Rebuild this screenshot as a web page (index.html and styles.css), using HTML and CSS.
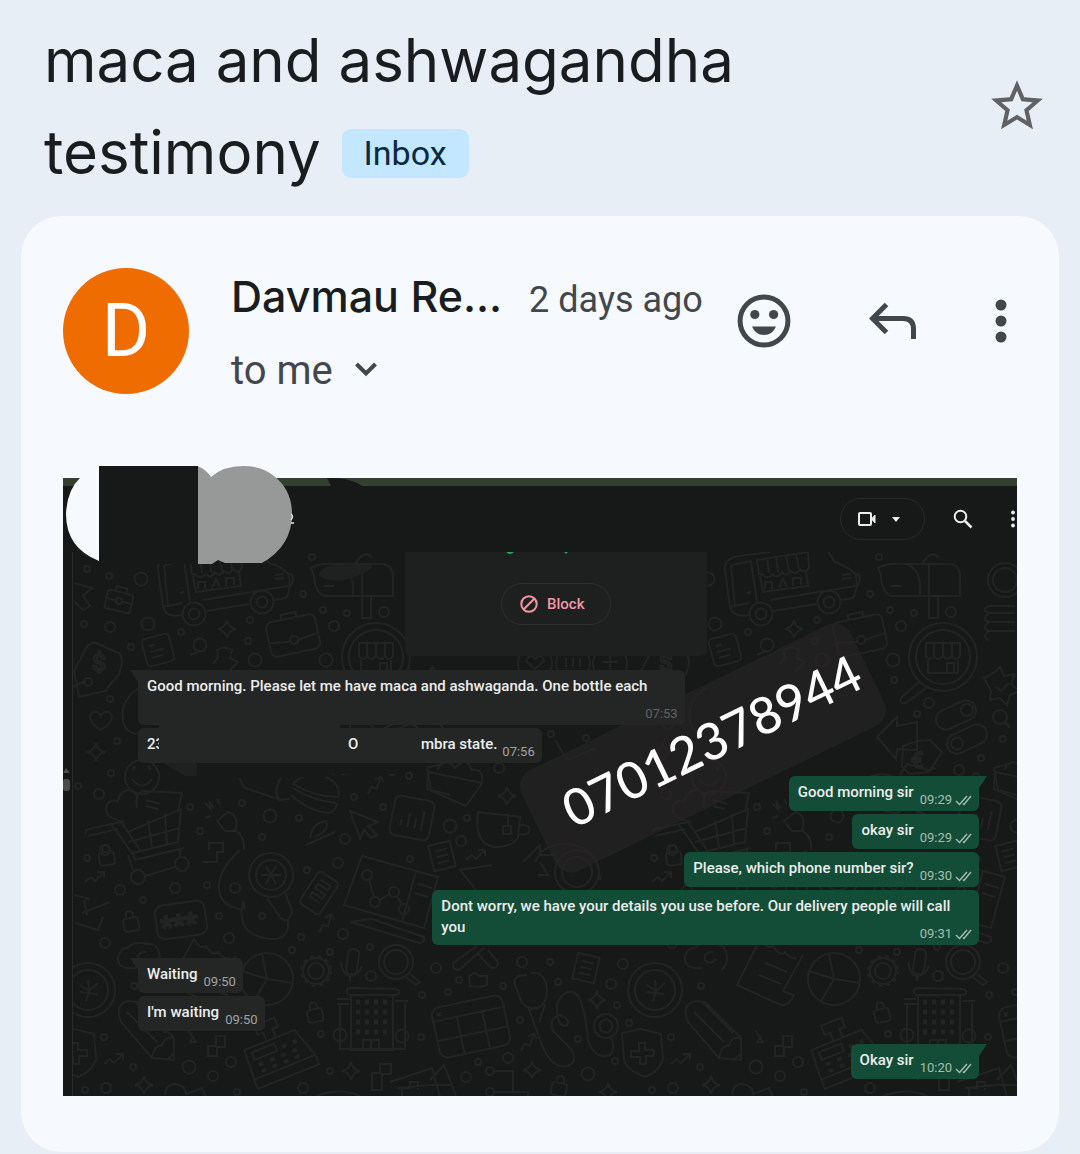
FILE: index.html
```
<!DOCTYPE html>
<html lang="en">

<head>
    <meta charset="UTF-8">
    <meta name="viewport" content="width=device-width, initial-scale=1.0">
    <title>maca and ashwagandha testimony</title>
    <link rel="stylesheet" href="styles.css">
</head>

<body>
    <header class="subject">
        <h1>maca and ashwagandha<br>testimony <span class="label">Inbox</span></h1>
        <button class="icon-button" aria-label="Star">
            <svg width="62" height="62" viewBox="0 0 24 24" fill="#5f6164"><path d="M22 9.24l-7.19-.62L12 2 9.19 8.63 2 9.24l5.46 4.73L5.82 21 12 17.27 18.18 21l-1.63-7.03L22 9.24zM12 15.4l-3.76 2.27 1-4.28-3.32-2.88 4.38-.38L12 6.1l1.71 4.04 4.38.38-3.32 2.88 1 4.28L12 15.4z"/></svg>
        </button>
    </header>

    <main class="card">
        <div class="sender">
            <div class="avatar">D</div>
            <div class="who">
                <div class="name-row">
                    <span class="name">Davmau Re...</span>
                    <span class="date">2 days ago</span>
                </div>
                <button class="to-me">to me
                    <svg width="22" height="18" viewBox="0 0 22 18" fill="none" stroke="#42474c" stroke-width="4"><path d="M1.500 2L11 11.500L20.500 2"/></svg>
                </button>
            </div>
            <div class="actions">
                <button class="icon-button" aria-label="Add reaction">
                    <svg width="54" height="54" viewBox="0 0 54 54" fill="#42474c">
                        <circle cx="27" cy="27" r="23.900" fill="none" stroke="#42474c" stroke-width="5"/>
                        <circle cx="17.800" cy="20.500" r="4.600"/><circle cx="36.600" cy="20.500" r="4.600"/>
                        <path d="M15 32.500H39Q35.500 41 27 41T15 32.500Z"/>
                    </svg>
                </button>
                <button class="icon-button" aria-label="Reply">
                    <svg width="48" height="40" viewBox="0 0 48 40" fill="none" stroke="#42474c" stroke-width="5"><path d="M17.500 3.500L3.500 17.500L17.500 31.500M4 17.500H34Q44.500 17.500 44.500 28V38"/></svg>
                </button>
                <button class="icon-button" aria-label="More options">
                    <svg width="12" height="44" viewBox="0 0 12 44" fill="#42474c"><circle cx="6" cy="6" r="5.500"/><circle cx="6" cy="22" r="5.500"/><circle cx="6" cy="38" r="5.500"/></svg>
                </button>
            </div>
        </div>

        <div class="attachment">
            <div class="shot">
                <!-- chat wallpaper, one 567px wide tile drawn twice -->
                <svg class="wallpaper" aria-hidden="true">
                    <defs>
                        <path id="spark" d="M0 -9Q1.500 -1.500 9 0Q1.500 1.500 0 9Q-1.500 1.500 -9 0Q-1.500 -1.500 0 -9Z"/>
                        <g id="lock"><rect x="-8" y="-3" width="15" height="13" rx="3"/><path d="M-4 -3V-8Q-1 -12 3 -8V-3"/></g>
                        <path id="trend" d="M-10 5L-4 0L0 4L9 -5M2 -5H9V1"/>
                        <g id="paper"><rect x="-11" y="-13" width="22" height="26"/><path d="M-6 -6H6M-6 0H6M-6 6H6"/></g>
                        <path id="heart" d="M0 9Q-11 2 -11 -4Q-10 -10 -4 -9Q-1 -8 0 -5Q1 -8 4 -9Q10 -10 11 -4Q11 2 0 9Z"/>
                        <g id="dots">
                            <g id="small-dots">
                                <circle cx="87" cy="569" r="3"/><circle cx="109" cy="576" r="3"/><circle cx="84" cy="624" r="3"/><circle cx="181" cy="632" r="3"/><circle cx="131" cy="647" r="3"/><circle cx="250" cy="620" r="3"/><circle cx="248" cy="641" r="3"/><circle cx="303" cy="594" r="3"/><circle cx="323" cy="610" r="3"/><circle cx="347" cy="613" r="3"/><circle cx="312" cy="557" r="3"/>
                                <circle cx="110" cy="699" r="3"/><circle cx="117" cy="741" r="3"/><circle cx="111" cy="773" r="3"/><circle cx="78" cy="786" r="3"/><circle cx="190" cy="807" r="3"/><circle cx="242" cy="803" r="3"/><circle cx="299" cy="818" r="3"/><circle cx="262" cy="837" r="3"/><circle cx="354" cy="797" r="3"/><circle cx="383" cy="807" r="3"/><circle cx="409" cy="776" r="3"/><circle cx="200" cy="831" r="3"/>
                                <circle cx="87" cy="858" r="3"/><circle cx="143" cy="900" r="3"/><circle cx="207" cy="885" r="3"/><circle cx="219" cy="916" r="3"/><circle cx="262" cy="916" r="3"/><circle cx="301" cy="937" r="3"/><circle cx="307" cy="870" r="3"/><circle cx="410" cy="859" r="3"/><circle cx="330" cy="952" r="3"/><circle cx="370" cy="947" r="3"/><circle cx="292" cy="950" r="3"/><circle cx="134" cy="986" r="3"/><circle cx="422" cy="995" r="3"/><circle cx="421" cy="1037" r="3"/><circle cx="321" cy="1034" r="3"/><circle cx="104" cy="1037" r="3"/><circle cx="133" cy="1067" r="3"/><circle cx="85" cy="1090" r="3"/><circle cx="237" cy="1092" r="3"/><circle cx="330" cy="1071" r="3"/>
                                <circle cx="550" cy="962" r="3"/><circle cx="459" cy="980" r="3"/><circle cx="503" cy="986" r="3"/><circle cx="448" cy="992" r="3"/><circle cx="558" cy="982" r="3"/><circle cx="617" cy="1005" r="3"/><circle cx="520" cy="1020" r="3"/><circle cx="578" cy="1039" r="3"/><circle cx="629" cy="1023" r="3"/><circle cx="478" cy="1062" r="3"/><circle cx="615" cy="1061" r="3"/><circle cx="551" cy="734" r="3"/><circle cx="586" cy="738" r="3"/><circle cx="467" cy="818" r="3"/>
                            </g>
                            <circle cx="141" cy="579" r="6.500"/><circle cx="110" cy="627" r="5"/><circle cx="148" cy="624" r="6.500"/><circle cx="255" cy="660" r="6.500"/><circle cx="326" cy="660" r="6.500"/><circle cx="334" cy="626" r="5"/><circle cx="384" cy="612" r="5"/><circle cx="99" cy="794" r="5"/><circle cx="270" cy="816" r="6.500"/><circle cx="345" cy="839" r="5"/><circle cx="120" cy="890" r="5"/><circle cx="175" cy="888" r="5"/><circle cx="235" cy="888" r="5"/><circle cx="105" cy="943" r="5"/><circle cx="229" cy="938" r="5"/><circle cx="338" cy="863" r="5"/><circle cx="343" cy="934" r="5"/><circle cx="371" cy="976" r="5"/><circle cx="189" cy="1067" r="6.500"/><circle cx="213" cy="1076" r="5"/><circle cx="231" cy="1062" r="5"/><circle cx="106" cy="1088" r="5"/><circle cx="303" cy="1088" r="5"/>
                            <circle cx="436" cy="968" r="5"/><circle cx="522" cy="962" r="5"/><circle cx="611" cy="984" r="5"/><circle cx="623" cy="964" r="5"/><circle cx="508" cy="1058" r="5"/><circle cx="466" cy="1077" r="5"/><circle cx="588" cy="1074" r="6.500"/><circle cx="450" cy="826" r="6.500"/><circle cx="499" cy="768" r="5"/><circle cx="461" cy="841" r="5"/>
                        </g>
                        <g id="tile">
                            <use href="#dots"/>
                            <use href="#spark" x="227" y="629"/><use href="#spark" x="96" y="752"/><use href="#spark" x="351" y="1071"/><use href="#spark" x="144" y="1085"/><use href="#spark" x="597" y="1000"/><use href="#spark" x="532" y="1070"/><use href="#spark" x="507" y="796"/><use href="#spark" x="608" y="1092"/>
                            <use href="#lock" transform="translate(131 921) rotate(-12)"/><use href="#lock" transform="translate(315 1012) rotate(-12)"/><use href="#lock" transform="translate(560 1086) rotate(10)"/><use href="#lock" transform="translate(107 855) rotate(-6)"/>
                            <use href="#trend" x="95" y="877"/><use href="#trend" x="114" y="1059"/><use href="#trend" x="476" y="855"/><use href="#trend" transform="translate(326 923) rotate(-30)"/><use href="#trend" transform="translate(528 1042) rotate(-25)"/><use href="#trend" transform="translate(375 785) rotate(-25)"/>
                            <use href="#heart" x="101" y="721"/>
                            <use href="#paper" transform="translate(586 968) rotate(13)"/><use href="#paper" transform="translate(442 856) rotate(-14)"/>
                            <!-- truck -->
                            <path d="M203 552L172 556Q157 558 158 570L163 606Q165 618 182 615M206 611L250 604M274 600L286 598Q291 590 289 575Q284 568 268 562L260 550M163 607L182 603M203 600L288 586M165 565L184 561L190 602M164 565L168 606M184 592L180 593M290 573Q296 578 290 587"/>
                            <path d="M190 560L241 552L242 568Q238 574 233 569Q229 576 224 571Q219 578 215 572Q210 580 206 574Q200 580 196 575L192 574ZM200 558L202 573M209 557L211 572M219 555L222 571M229 554L232 569M193 576L196 592L241 586L239 572M198 589V582H205V589M212 588L216 579L220 587M226 586V578H234V585M275 575L284 574M275 579L284 578"/>
                            <circle cx="194" cy="614" r="11.500"/><circle cx="194" cy="614" r="5.500"/><circle cx="262" cy="602" r="11.500"/><circle cx="262" cy="602" r="5.500"/>
                            <!-- mailbox -->
                            <path d="M311 568Q318 563 335 564H380Q393 563 393 578V596H325Q314 592 314 575ZM337 564Q355 566 353 596M362 564V596M362 597V618H371V597M324 586H334M355 564Q365 548 372 558"/>
                            <!-- bags -->
                            <g transform="translate(119 601) rotate(14)"><rect x="-13" y="-9" width="26" height="19" rx="3"/><path d="M-6 -9V-14H5V-9M-13 0H-3M3 0H13"/><circle r="3"/></g>
                            <g transform="translate(293 635) rotate(-12)"><rect x="-25" y="-17" width="50" height="35" rx="6"/><path d="M-8 -17V-22H7V-17M-25 3L-4 6M4 6L25 3"/><circle cy="5" r="4"/></g>
                            <g transform="translate(158 650) rotate(-15)"><rect x="-14" y="-14" width="28" height="28" rx="4"/><path d="M-8 -6H-2M-8 0H6M-8 6H4"/></g>
                            <path d="M213 664L218 657L217 650Q225 645 232 650L230 658L238 662L228 672M200 651L190 655"/><circle cx="200" cy="645" r="6.500"/>
                            <path d="M74 583L92 588L83 596L90 606L83 610L74 601"/>
                            <!-- price tag -->
                            <path d="M96 643L119 653Q125 660 119 674L105 691L79 697L74 671L86 648Q90 642 96 643ZM70 688L86 681"/><circle cx="88" cy="682" r="4"/>
                            <text x="92" y="671" font-size="24">$</text>
                            <!-- shop under a lens -->
                            <circle cx="376" cy="657" r="34"/><circle cx="376" cy="657" r="27"/>
                            <path d="M359 643H393V656Q389 662 385 656Q381 662 376 656Q371 662 367 656Q363 662 359 656ZM367 643V656M376 643V656M385 643V656M361 660V673H391V660M380 673V663H387V673M352 682L335 697Q331 704 339 703L359 688"/>
                            <!-- face, heart, cart -->
                            <circle cx="142" cy="777" r="17"/><path d="M133 770L135 766M148 766L151 770M132 779Q142 792 152 779M139 688Q120 700 123 720Q124 732 137 734"/>
                            <path d="M124 822Q104 818 106 807Q109 799 118 801Q120 790 130 790Q138 793 137 800M137 808Q135 793 143 791L182 793L178 812M146 800L160 804M146 806L158 809"/>
                            <path d="M86 834Q84 831 89 829L121 822L128 832L181 809L178 842L132 853L112 825M128 832L140 850M148 820L152 847M165 814L167 845M128 842L180 828M133 853L135 860L184 848M88 836L118 829"/><circle cx="105" cy="850" r="5"/>
                            <path d="M205 803L211 809L209 801L214 808M217 799L220 804M205 818L211 816M217 821L228 812Q240 815 235 831L225 831ZM234 830Q245 835 244 850M209 850V843H223V850"/>
                            <!-- food -->
                            <path d="M240 778Q242 789 251 790L281 800M281 778Q272 792 280 800L290 799M296 781Q315 767 334 782Q341 789 338 797Q315 797 293 784ZM293 788Q313 801 336 803M291 795Q310 812 330 813Q337 809 337 803M333 775L340 764L362 770L369 768"/>
                            <!-- pointer and chart -->
                            <path d="M350 811L378 822L368 826L377 835L371 838L364 830L360 838ZM310 838Q312 823 326 821Q330 830 315 837M306 845L335 832"/>
                            <g transform="translate(412 818) rotate(11)"><rect x="-20" y="-20" width="40" height="40" rx="6"/><path d="M-10 10V3M-3 10V-4M4 10V-1M11 10V-9"/></g>
                            <!-- box, mug -->
                            <path d="M428 772L482 783L466 806L427 789ZM437 770Q445 755 455 768Q466 755 472 770Q484 768 482 783M555 740L567 760L596 748M478 812L520 817L518 838Q510 848 495 847Q474 845 478 812ZM520 825Q532 824 529 832Q526 836 519 834M508 814V826M503 826H511V834H503Z"/>
                            <!-- nodes and password -->
                            <circle cx="138" cy="877" r="7"/><circle cx="182" cy="864" r="7"/><path d="M145 876L175 867M133 870L128 855M180 857V848M74 895L90 899M82 913L110 902M84 900L87 915M103 917L98 930L75 923M203 862H217V852H223V846"/>
                            <g transform="translate(181 920) rotate(-8)"><rect x="-25" y="-17" width="50" height="34" rx="8"/><text x="-21" y="14" font-size="28">***</text></g>
                            <!-- flower under a lens -->
                            <circle cx="271" cy="875" r="22"/><circle cx="271" cy="875" r="15"/><path d="M261 875H281M266 866L276 884M276 866L266 884M267 898L280 917M285 892L292 911Q289 925 280 918M240 850Q218 870 219 888Q220 905 237 908Q248 913 243 902Q235 935 270 939Q290 940 288 920"/>
                            <g transform="translate(319 893) rotate(33)"><rect x="-12" y="-19" width="24" height="38" rx="4"/><path d="M-6 -12H6V-7H-6V-2H6V3H-6V8H6"/></g>
                            <!-- monitor -->
                            <path d="M362 856L438 877L424 928L344 905ZM416 871L402 922M351 922L416 942Q425 945 424 937L372 919ZM418 884L432 888M415 893L428 897M369 880L374 897M380 900L389 894M397 896L402 904"/><circle cx="367" cy="875" r="5"/><circle cx="375" cy="902" r="5"/><circle cx="394" cy="892" r="5"/><circle cx="404" cy="909" r="5"/>
                            <!-- coin -->
                            <circle cx="88" cy="990" r="27"/><circle cx="88" cy="990" r="20"/><path d="M80 985L89 991L98 983M89 991L86 1001M80 992L97 994M88 980L89 991"/>
                            <!-- cloud, receipt -->
                            <path d="M136 968Q117 970 118 957Q121 947 128 948Q135 940 146 944Q158 942 160 957Q161 965 154 970M146 952Q136 952 138 960Q142 966 149 959M185 955L194 939Q200 950 206 946Q213 957 218 952Q224 960 230 958M185 955L170 985L214 1005Q222 1006 227 995L216 991L236 955M198 963L220 972M192 975L214 984"/>
                            <!-- pie, gear, mic, lens -->
                            <circle cx="267" cy="979" r="26"/><path d="M267 979L262 954M267 979L242 971M267 979L293 983M267 979L254 1001"/>
                            <circle cx="316" cy="971" r="8"/><circle cx="316" cy="971" r="13"/><circle cx="316" cy="971" r="15" stroke-dasharray="4 4"/>
                            <rect x="347" y="949" width="11" height="25" rx="5" transform="rotate(8 352 962)"/><path d="M341 962Q343 976 351 976Q358 976 362 966M350 976V981"/>
                            <circle cx="396" cy="962" r="17"/><circle cx="396" cy="962" r="12"/><path d="M410 974L420 982L416 985L406 977"/>
                            <!-- hospital -->
                            <path d="M347 990Q346 995 351 995H395Q400 995 399 991Q398 989 395 989L351 988Q347 988 347 990ZM351 996V1050H393V996M337 999H349M337 1004H349M340 1004V1049H405V1003M395 1001H408M363 1050V1040H379V1050M371 1040V1050"/>
                            <g stroke-dasharray="4 5"><path d="M356 1002H388M356 1012H388M356 1022H388M356 1032H388" stroke-width="5"/></g>
                            <circle cx="340" cy="1035" r="6.500"/><circle cx="402" cy="1036" r="6.500"/>
                            <!-- pencil -->
                            <path d="M119 1015Q117 1004 128 1001L138 1002L174 1038V1060L152 1058L121 1022ZM127 1012L157 1042M136 1003L166 1033M152 1058Q155 1044 162 1046Q164 1036 173 1038M167 1060L174 1053M188 1030L196 1042L190 1042L194 1036"/>
                            <g transform="translate(283 1055) rotate(-22)"><path d="M-34 -19H20L30 12V22H-36V12ZM-36 12H30M-10 -19V-28H-16V-38H6V-28H0V-19"/><rect x="-28" y="-14" width="24" height="8"/><path d="M-26 0H20M-26 7H22M2 -8H18" stroke-dasharray="5 7" stroke-width="4"/></g>
                            <!-- shield -->
                            <path d="M55 1033L74 1029L94 1034L96 1060Q90 1073 78 1077Q60 1070 57 1060ZM72 1043H78V1050H87V1056H79V1064H73V1057H64V1051H72Z"/>
                            <path d="M372 1090V1073H380V1064H391V1074H382V1090ZM208 1056V1046H216V1036H225V1047H217V1056ZM390 1082L432 1068L440 1097M398 1088L430 1085M402 1096V1088H410V1082H418V1090M165 1095Q166 1083 176 1084Q186 1086 186 1094L202 1088L206 1097M316 1096Q340 1087 360 1096"/>
                            <!-- tools, calendar -->
                            <path d="M477 946L453 963Q452 970 459 970L484 948M478 954L490 967Q498 970 498 962L488 950M469 976L475 973L480 976H487V985Q480 988 470 986Z"/>
                            <g transform="translate(471 1026) rotate(-12)"><rect x="-36" y="-25" width="72" height="51" rx="8"/><path d="M-36 -12H36M-12 -12V26M14 -12V26M-36 8H36M-31 -20L-27 -16M-27 -20L-31 -16"/></g>
                            <!-- stethoscope -->
                            <path d="M527 975Q512 975 515 985L522 1003Q530 1012 541 1006Q549 998 546 983Q542 971 531 973M528 1007L542 1045Q552 1070 568 1066Q580 1060 569 1047L553 1031Q548 1018 560 1015Q572 1020 566 1026Q556 1026 557 1005Q562 990 574 992Q584 998 588 1040Q595 1060 610 1055Q616 1048 611 1038M545 1004L539 1023"/><circle cx="606" cy="1026" r="12"/><circle cx="606" cy="1026" r="6.500"/>
                            <circle cx="490" cy="1071" r="4"/><circle cx="490" cy="1092" r="4"/><path d="M494 1071H513V1092H494M513 1092H528V1097M430 1080L444 1065L452 1085H430M452 1085L456 1097"/>
                            <!-- coins in the middle row -->
                            <circle cx="535" cy="663" r="17"/><circle cx="573" cy="663" r="17"/><circle cx="610" cy="663" r="17"/><path d="M603 662H617M610 655V669M566 658V667M573 658V667M580 658V667M526 661Q530 652 535 659Q541 652 544 661L535 669Z"/>
                            <!-- toggles, arrows, burst -->
                            <g transform="translate(389 715) rotate(-25)"><rect x="-21" y="-10" width="42" height="20" rx="10"/><circle cx="12" r="6"/></g>
                            <g transform="translate(400 739) rotate(-25)"><rect x="-21" y="-10" width="42" height="20" rx="10"/><circle cx="-11" r="6"/></g>
                            <path d="M310 737L330 717V726L350 722V750L330 749L329 759ZM336 746Q350 740 363 740L375 752L362 772L342 774L335 766Z"/><text x="344" y="768" font-size="22">€</text>
                            <path d="M417 678L428 672L433 667L437 676L448 674L444 684L452 691L443 695L440 705L433 698L423 700L424 691ZM429 687L434 691L442 683"/>
                            <circle cx="433" cy="717" r="7"/><path d="M438 722L443 728M421 606Q414 611 422 613H448M422 613Q414 620 422 622H448M422 622Q414 628 422 631H448M422 631Q414 637 422 640M421 606H448M427 768L448 762M427 768L431 790L450 795"/>
                            <circle cx="438" cy="580" r="17"/><circle cx="438" cy="580" r="12"/>
                            <circle cx="362" cy="703" r="5"/><circle cx="350" cy="714" r="3"/><circle cx="414" cy="758" r="3"/><circle cx="392" cy="770" r="5"/><circle cx="436" cy="739" r="3"/><circle cx="327" cy="680" r="3"/>
                            <path d="M535 862Q545 840 575 845Q598 850 600 880M523 862L540 845V855H555M538 875H548L540 862M480 895L460 870L492 865"/><circle cx="577" cy="872" r="22"/><circle cx="577" cy="872" r="15"/>
                        </g>
                    </defs>
                    <g transform="translate(-63 -478)">
                        <g class="doodles">
                            <use href="#tile"/>
                            <use href="#tile" x="567"/>
                        </g>
                        <rect x="63" y="478" width="9" height="620" fill="#161817"/>
                        <path d="M72.500 552V1098" stroke="#2a2c2b"/>
                        <path d="M63 773H70L66 768Z" fill="#4b4d4c"/><rect x="63" y="779" width="7" height="12" rx="3" fill="#4b4d4c"/>
                        <!-- brush marks -->
                        <path d="M159 720H340V762H159Z" fill="#242625"/>
                        <path d="M164 762H420L400 774H330L325 777H164Z" fill="#171918"/>
                        <path d="M160 761L197 761V776H185Z" fill="#1f2120"/>
                        <path d="M318 575Q325 562 345 566L374 564Q368 574 345 580Q325 582 318 575Z" fill="#1f2120"/>
                    </g>
                </svg>

                <div class="phone-note">07012378944</div>

                <div class="chat-bar">
                    <button class="call" aria-label="Video call">
                        <svg width="18" height="16" viewBox="0 0 18 16" fill="none" stroke="#eceeed" stroke-width="2"><rect x="1" y="2" width="12" height="12" rx="1"/><path d="M13.500 8L17 4V12Z" fill="#eceeed" stroke-width="1"/></svg>
                        <svg width="8" height="5" viewBox="0 0 8 5" fill="#eceeed"><path d="M0 0H8L4 5Z"/></svg>
                    </button>
                    <button class="icon-button" aria-label="Search">
                        <svg width="20" height="20" viewBox="0 0 20 20" fill="none" stroke="#eceeed" stroke-width="2"><circle cx="7.500" cy="7.500" r="5.800"/><path d="M12 12L18.500 18.500" stroke-width="2.500"/></svg>
                    </button>
                    <button class="icon-button" aria-label="Menu">
                        <svg width="4" height="18" viewBox="0 0 4 18" fill="#eceeed"><circle cx="2" cy="2.500" r="1.900"/><circle cx="2" cy="9" r="1.900"/><circle cx="2" cy="15.500" r="1.900"/></svg>
                    </button>
                </div>

                <div class="chat">
                    <div class="contact">
                        <svg class="cut-line" width="62" height="3" viewBox="0 0 62 3" fill="#1fa855"><path d="M0 0H8Q4 4 0 0ZM58 0H62L60 2Z"/></svg>
                        <button class="block">
                            <svg width="18" height="18" viewBox="0 0 18 18" fill="none" stroke="#f297a8" stroke-width="2"><circle cx="9" cy="9" r="7.700"/><path d="M3.500 14.500L14.500 3.500"/></svg>
                            Block
                        </button>
                    </div>

                    <div class="messages">
                        <div class="bubble in tail wide">
                            <span>Good morning. Please let me have maca and ashwaganda. One bottle each</span>
                            <time class="dim">07:53</time>
                        </div>
                        <div class="bubble in redacted">
                            <span class="first">23</span><span class="second">O</span><span class="third">mbra state.</span>
                            <time>07:56</time>
                        </div>
                        <div class="bubble out tail">
                            <span>Good morning sir</span>
                            <time>09:29 <svg width="17" height="11" viewBox="0 0 17 11"><path d="M1 6L4.500 9.500L12 1M8 8.500L9 9.500L16 1"/></svg></time>
                        </div>
                        <div class="bubble out">
                            <span>okay sir</span>
                            <time>09:29 <svg width="17" height="11" viewBox="0 0 17 11"><path d="M1 6L4.500 9.500L12 1M8 8.500L9 9.500L16 1"/></svg></time>
                        </div>
                        <div class="bubble out">
                            <span>Please, which phone number sir?</span>
                            <time>09:30 <svg width="17" height="11" viewBox="0 0 17 11"><path d="M1 6L4.500 9.500L12 1M8 8.500L9 9.500L16 1"/></svg></time>
                        </div>
                        <div class="bubble out wide">
                            <span>Dont worry, we have your details you use before. Our delivery people will call you</span>
                            <time>09:31 <svg width="17" height="11" viewBox="0 0 17 11"><path d="M1 6L4.500 9.500L12 1M8 8.500L9 9.500L16 1"/></svg></time>
                        </div>
                        <div class="bubble in tail">
                            <span>Waiting</span>
                            <time>09:50</time>
                        </div>
                        <div class="bubble in">
                            <span>I'm waiting</span>
                            <time>09:50</time>
                        </div>
                        <div class="bubble out tail">
                            <span>Okay sir</span>
                            <time>10:20 <svg width="17" height="11" viewBox="0 0 17 11"><path d="M1 6L4.500 9.500L12 1M8 8.500L9 9.500L16 1"/></svg></time>
                        </div>
                    </div>
                </div>
            </div>

            <!-- shapes painted over the contact name -->
            <svg class="cover" width="300" height="100" viewBox="63 465 300 100" aria-hidden="true">
                <path d="M99 466V561Q66 548 66 514Q67 490 80 478L99 470Z" fill="#f6f9fe"/>
                <path d="M197 466Q206 469 211 477Q223 466 243 466Q262 466 274 476Q292 490 292 514Q292 546 262 563H225L218 560L212 564H197Z" fill="#979998"/>
                <rect x="99" y="466" width="99" height="98" fill="#171918"/>
                <path d="M291 514Q294 516 291 520M291 523H294" stroke="#e6e8e7" stroke-width="1.500" fill="none"/>
                <path d="M327 478Q350 477 362 486H331Z" fill="#171918"/>
            </svg>
        </div>
    </main>
</body>

</html>
```
FILE: styles.css
```
* {
    box-sizing: border-box;
}

body {
    margin: 0;
    background: #e8eef6;
    color: #191d20;
    font-family: Inter, Roboto, sans-serif;
}

button {
    margin: 0;
    padding: 0;
    border: none;
    background: none;
    color: inherit;
    font: inherit;
    cursor: pointer;
}

svg {
    display: block;
}

/* Subject line */
.subject {
    display: flex;
    justify-content: space-between;
    align-items: center;
    padding: 14px 32px 18px 44px;
}

h1 {
    margin: 0;
    font-size: 60px;
    font-weight: 400;
    line-height: 92px;
}

.label {
    display: inline-block;
    margin-left: 4px;
    padding: 0 22px;
    border-radius: 9px;
    background: #c2e7ff;
    color: #0a2a3f;
    font-family: Roboto, sans-serif;
    font-size: 34px;
    line-height: 49px;
    vertical-align: 9px;
}

/* Message card */
.card {
    margin: 0 21px 1px;
    padding: 52px 42px 56px;
    border-radius: 40px;
    background: #f6f9fe;
}

.sender {
    display: flex;
    margin-bottom: 79px;
}

.avatar {
    flex: none;
    width: 126px;
    height: 126px;
    border-radius: 50%;
    background: #ef6c00;
    color: #fff;
    font-family: Roboto, sans-serif;
    font-size: 74px;
    line-height: 126px;
    text-align: center;
}

.who {
    flex: 1;
    margin-left: 42px;
    color: #42474c;
    font-family: Roboto, sans-serif;
}

.name-row {
    display: flex;
    align-items: baseline;
    gap: 27px;
    line-height: 56px;
    white-space: nowrap;
}

.name {
    color: #191d20;
    font-family: Inter, sans-serif;
    font-size: 43px;
    font-weight: 500;
}

.date {
    font-size: 36px;
}

.to-me {
    display: flex;
    align-items: center;
    gap: 22px;
    margin-top: 15px;
    font-size: 40px;
    line-height: 56px;
}

.actions {
    display: flex;
    align-items: center;
    gap: 78px;
    height: 106px;
    padding-right: 10px;
}

/* Attached chat screenshot */
.attachment {
    position: relative;
}

.shot {
    position: relative;
    overflow: hidden;
    border-top: 8px solid #33402f;
    background: #171918;
    color: #eceeed;
    font-family: Roboto, sans-serif;
    font-size: 15px;
    font-weight: 500;
}

.wallpaper {
    position: absolute;
    top: -8px;
    left: 0;
    width: 100%;
    height: 620px;
}

.doodles {
    fill: none;
    stroke: #222423;
    stroke-width: 2;
}

.doodles text {
    fill: #222423;
    stroke: none;
    font-weight: 400;
}

.cover {
    position: absolute;
    top: -13px;
    left: 0;
}

.chat-bar {
    position: relative;
    display: flex;
    justify-content: flex-end;
    align-items: center;
    height: 66px;
    padding-right: 2px;
    background: #171918;
}

.call {
    display: flex;
    align-items: center;
    gap: 16px;
    width: 85px;
    height: 42px;
    margin-right: 28px;
    padding-left: 17px;
    border: 1px solid #282a29;
    border-radius: 21px;
}

.chat-bar .icon-button:last-child {
    margin-left: 38px;
}

.chat {
    position: relative;
    display: flex;
    flex-direction: column;
    align-items: center;
    gap: 14px;
    padding: 0 0 17px 32px;
}

.contact {
    display: flex;
    justify-content: center;
    align-items: center;
    position: relative;
    width: 302px;
    height: 104px;
    border-radius: 0 0 6px 6px;
    background: #1e201f;
}

.cut-line {
    position: absolute;
    top: 0;
    left: 101px;
}

.block {
    display: flex;
    align-items: center;
    gap: 9px;
    width: 110px;
    height: 42px;
    padding-left: 18px;
    border: 1px solid #2d2f2e;
    border-radius: 21px;
    color: #f297a8;
}

.messages {
    display: flex;
    flex-direction: column;
    align-items: flex-start;
    gap: 3px;
    width: 100%;
    padding: 0 38px 0 43px;
}

.bubble {
    position: relative;
    display: flex;
    gap: 6px;
    min-height: 35px;
    padding: 6px 7px 4px 9px;
    border-radius: 6px;
    line-height: 21px;
}

.in {
    background: #242625;
}

.out {
    align-self: flex-end;
    background: #144d37;
}

.bubble time {
    display: flex;
    align-items: center;
    align-self: flex-end;
    gap: 3px;
    color: #a0a3a2;
    font-size: 13px;
    font-weight: 400;
    line-height: 14px;
}

.out time {
    color: #a5beb2;
}

.bubble .dim {
    color: #5f6261;
}

.bubble time path {
    fill: none;
    stroke: #a5beb2;
    stroke-width: 1.4;
}

.wide {
    display: grid;
    width: 65%;
    min-height: 55px;
}

.wide span,
.wide time {
    grid-area: 1 / 1;
}

.wide time {
    justify-self: end;
}

.bubble:not(.tail) + .tail {
    margin-top: 10px;
}

.tail::before {
    content: "";
    position: absolute;
    top: 0;
    left: -8px;
    width: 16px;
    height: 12px;
    background: inherit;
    clip-path: polygon(0 0, 100% 0, 100% 100%, 50% 100%);
}

.out.tail::before {
    left: auto;
    right: -8px;
    clip-path: polygon(0 0, 100% 0, 50% 100%, 0 100%);
}

/* Blanked out address, only slivers of the text are left */
.redacted {
    gap: 0;
}

.first,
.second {
    overflow: hidden;
}

.first {
    width: 12px;
    margin-right: 189px;
}

.second {
    width: 10px;
    margin-right: 63px;
}

.third {
    margin-right: 5px;
}

/* Number written across the screenshot */
.phone-note {
    position: absolute;
    top: 206px;
    left: 457px;
    width: 366px;
    height: 112px;
    padding-left: 22px;
    border-radius: 18px;
    background: rgba(38, 35, 36, 0.7);
    color: #fff;
    font-family: Lato, sans-serif;
    font-size: 51px;
    font-weight: 500;
    line-height: 106px;
    text-align: center;
    transform: rotate(-26deg);
}
```
